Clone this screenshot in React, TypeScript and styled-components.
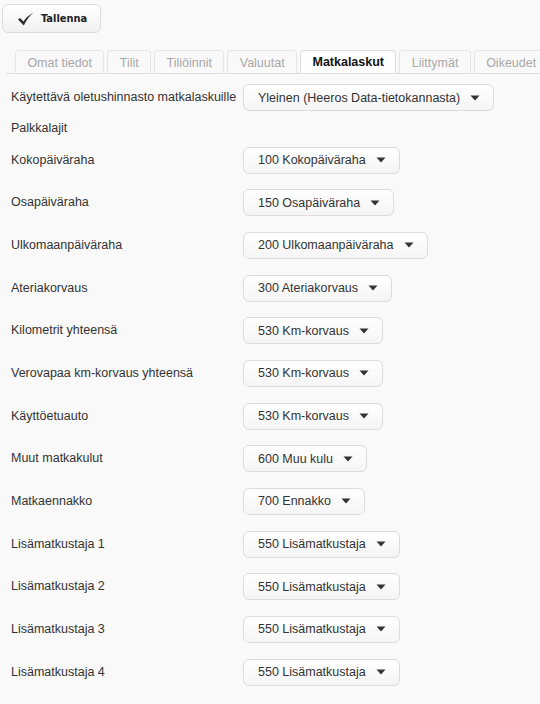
import React from "react";
import styled, { createGlobalStyle } from "styled-components";

const GlobalStyle = createGlobalStyle`
  html, body {
    margin: 0;
    padding: 0;
    background: #f9f9f9;
    font-family: "Liberation Sans", Arial, sans-serif;
  }
`;

const Page = styled.div`
  width: 540px;
  height: 704px;
  overflow: hidden;
  background: #f9f9f9;
`;

const Toolbar = styled.div`
  padding: 4px 0 0 2px;
  height: 50px;
  box-sizing: border-box;
`;

const SaveButton = styled.button`
  display: flex;
  align-items: center;
  gap: 7px;
  width: 99px;
  height: 29px;
  padding: 0 0 0 14px;
  box-sizing: border-box;
  border: 1px solid #dcdcdc;
  border-radius: 6px;
  background: linear-gradient(#ffffff, #f1f1f1);
  font-family: Tahoma, "DejaVu Sans Condensed", "Liberation Sans", sans-serif;
  font-weight: bold;
  font-size: 11px;
  color: #222;
  cursor: pointer;
`;

const TabBar = styled.div`
  display: flex;
  gap: 3px;
  margin-left: 6px;
  padding-left: 9px;
  border-bottom: 1px solid #dedede;
  height: 23px;
  overflow: hidden;
`;

const Tab = styled.div<{ $active?: boolean }>`
  flex: none;
  height: 24px;
  min-width: 20px;
  box-sizing: border-box;
  padding: 0 11.4px;
  display: flex;
  align-items: center;
  border: 1px solid ${(p) => (p.$active ? "#dedede" : "#e6e6e6")};
  border-bottom: ${(p) => (p.$active ? "1px solid #ffffff" : "none")};
  border-radius: 4px 4px 0 0;
  background: ${(p) => (p.$active ? "#ffffff" : "#f9f9f9")};
  font-size: 12.5px;
  font-weight: ${(p) => (p.$active ? "bold" : "normal")};
  color: ${(p) => (p.$active ? "#111" : "#a8a8a8")};
  white-space: nowrap;
`;

const Form = styled.div`
  padding: 10px 0 0 11px;
`;

const Row = styled.div`
  display: flex;
  align-items: flex-start;
  margin-bottom: 15.67px;
`;

const Label = styled.div`
  width: 232px;
  flex: none;
  padding-top: 6px;
  font-size: 12.5px;
  color: #333;
  white-space: nowrap;
`;

const SectionTitle = styled.div`
  font-size: 12.5px;
  color: #333;
  line-height: 15px;
  margin: -6px 0 11px;
`;

const Select = styled.div`
  display: flex;
  align-items: center;
  gap: 10px;
  height: 27px;
  box-sizing: border-box;
  padding: 0 13px 0 14px;
  border: 1px solid #dcdcdc;
  border-radius: 6px;
  background: linear-gradient(#ffffff, #f5f5f5);
  font-size: 12.5px;
  color: #333;
  white-space: nowrap;
`;

const Caret = () => (
  <svg width="10" height="6" viewBox="0 0 10 6">
    <path d="M0.5 0.5 L9.5 0.5 L5 5.5 Z" fill="#333" />
  </svg>
);

const Check = () => (
  <svg width="17" height="14" viewBox="0 0 17 14">
    <path
      d="M1 7.5 L3 6 L6.5 9.5 Q10 4 16.5 0.5 Q10.5 5.5 6.8 13.5 Z"
      fill="#2b2b2b"
    />
  </svg>
);

const tabs = [
  "Omat tiedot",
  "Tilit",
  "Tiliöinnit",
  "Valuutat",
  "Matkalaskut",
  "Liittymät",
  "Oikeudet",
];

const rows = [
  ["Kokopäiväraha", "100 Kokopäiväraha"],
  ["Osapäiväraha", "150 Osapäiväraha"],
  ["Ulkomaanpäiväraha", "200 Ulkomaanpäiväraha"],
  ["Ateriakorvaus", "300 Ateriakorvaus"],
  ["Kilometrit yhteensä", "530 Km-korvaus"],
  ["Verovapaa km-korvaus yhteensä", "530 Km-korvaus"],
  ["Käyttöetuauto", "530 Km-korvaus"],
  ["Muut matkakulut", "600 Muu kulu"],
  ["Matkaennakko", "700 Ennakko"],
  ["Lisämatkustaja 1", "550 Lisämatkustaja"],
  ["Lisämatkustaja 2", "550 Lisämatkustaja"],
  ["Lisämatkustaja 3", "550 Lisämatkustaja"],
  ["Lisämatkustaja 4", "550 Lisämatkustaja"],
];

const App = () => {
  return (
    <Page>
      <GlobalStyle />
      <Toolbar>
        <SaveButton>
          <Check />
          Tallenna
        </SaveButton>
      </Toolbar>
      <TabBar>
        {tabs.map((t) => (
          <Tab key={t} $active={t === "Matkalaskut"}>
            {t}
          </Tab>
        ))}
        <Tab />
      </TabBar>
      <Form>
        <Row>
          <Label>Käytettävä oletushinnasto matkalaskuille</Label>
          <Select>
            Yleinen (Heeros Data-tietokannasta) <Caret />
          </Select>
        </Row>
        <SectionTitle>Palkkalajit</SectionTitle>
        {rows.map(([label, value]) => (
          <Row key={label}>
            <Label>{label}</Label>
            <Select>
              {value} <Caret />
            </Select>
          </Row>
        ))}
      </Form>
    </Page>
  );
};

export default App;
